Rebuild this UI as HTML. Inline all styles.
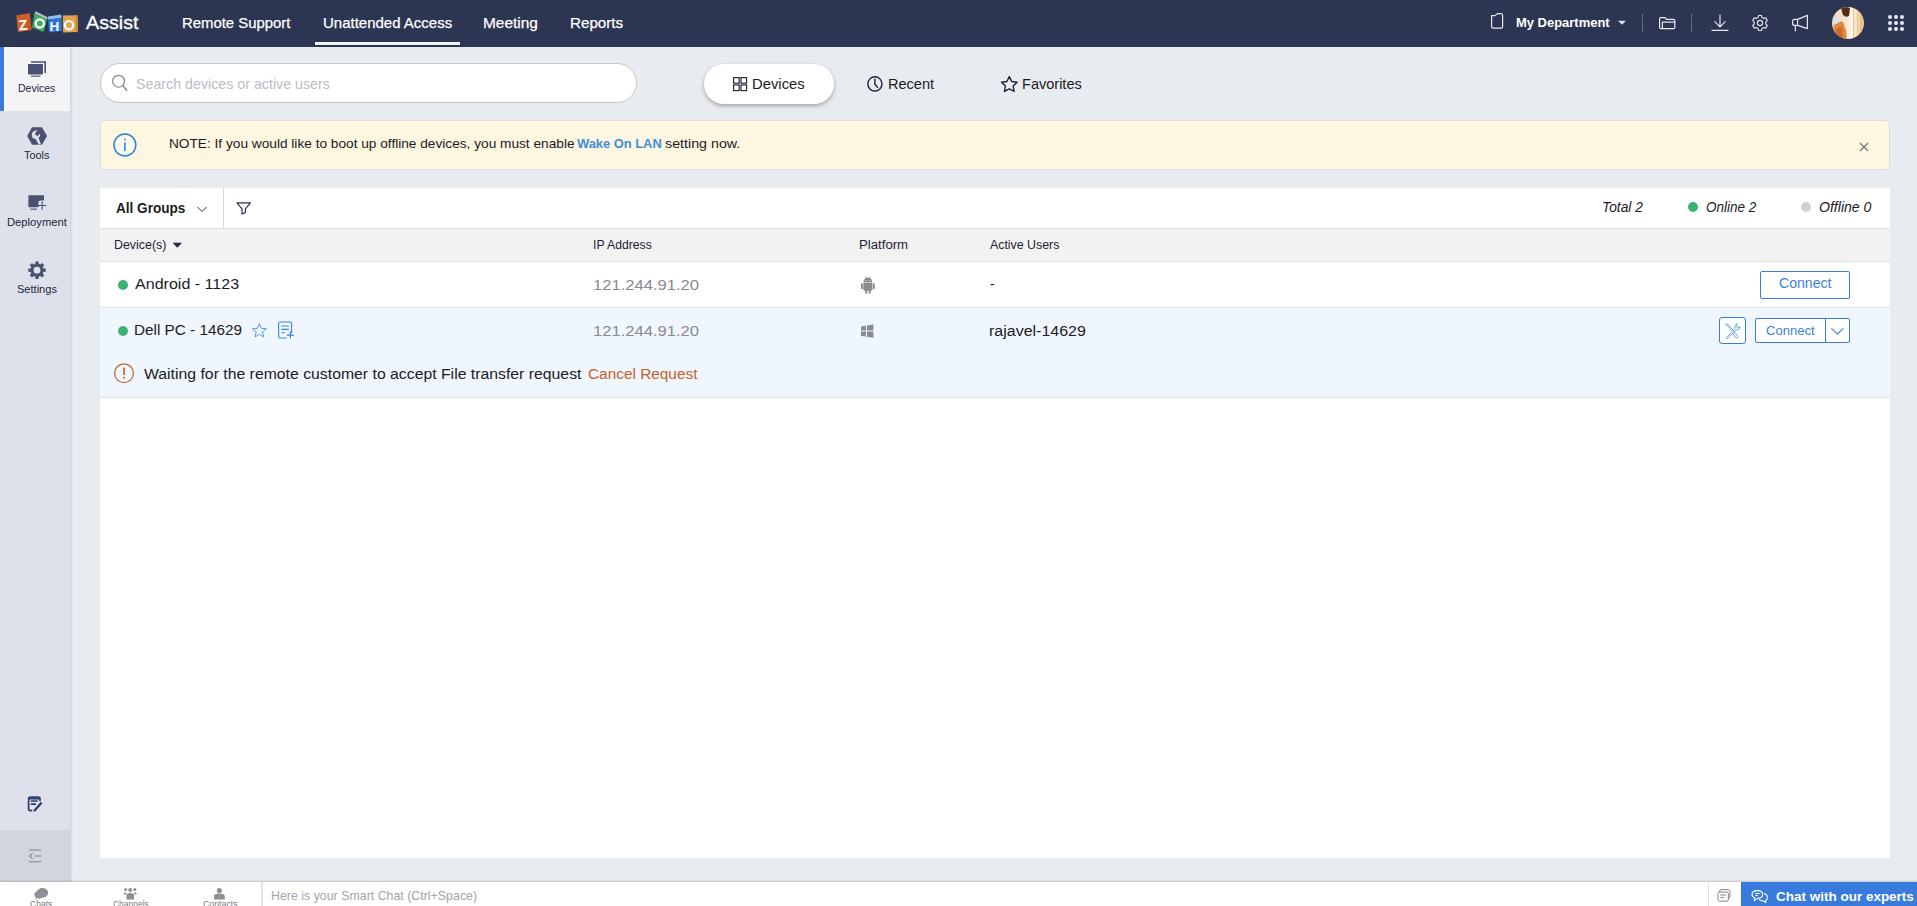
<!DOCTYPE html>
<html><head><meta charset="utf-8">
<style>
*{box-sizing:border-box;margin:0;padding:0}
html,body{width:1917px;height:906px;overflow:hidden;background:#e8ebf0;font-family:"Liberation Sans",sans-serif;color:#1b1b24}
.abs{position:absolute}
.t{position:absolute;white-space:nowrap;transform-origin:0 0;line-height:1}
#hdr{position:absolute;left:0;top:0;width:1917px;height:47px;background:#2c3552}
#hdr .t{color:#fff;-webkit-text-stroke:.25px #fff}
#side{position:absolute;left:0;top:47px;width:70px;height:835px;background:#dee1eb;box-shadow:1px 0 2px rgba(0,0,0,.14)}
#side .act{position:absolute;left:0;top:0;width:70px;height:64px;background:#f3f4f6;border-left:4px solid #3a7bdc}
#side .t{color:#23273a;font-size:11px}
#side .foot{position:absolute;left:0;top:783px;width:70px;height:52px;background:#d2d5dd}
#search{position:absolute;left:100px;top:63px;width:537px;height:40px;border:1px solid #c6c6cc;border-radius:20px;background:#fff}
#pill{position:absolute;left:704px;top:64px;width:130px;height:40px;border-radius:20px;background:#fff;box-shadow:0 2px 4px rgba(0,0,0,.3)}
#note{position:absolute;left:100px;top:120px;width:1790px;height:50px;background:#fdf6e0;border:1px solid #dadbe1;border-radius:4px}
#panel{position:absolute;left:100px;top:188px;width:1790px;height:670px;background:#fff}
#tb{position:absolute;left:0;top:0;width:1790px;height:41px;border-bottom:1px solid #dedede}
#thead{position:absolute;left:0;top:41px;width:1790px;height:33px;background:#f2f2f2;border-bottom:1px solid #e0e0e0}
#thead .t{font-size:12.5px;color:#1f2233}
#r1{position:absolute;left:0;top:74px;width:1790px;height:46px}
#r1:after{content:"";position:absolute;left:0;top:45px;width:1790px;height:1px;background:repeating-linear-gradient(90deg,#dde0e6 0 2px,#eef1f6 2px 3px)}
#r2{position:absolute;left:0;top:120px;width:1790px;height:90px;background:#f0f6fd;border-bottom:1px solid #dde1e8}
.dot{position:absolute;width:10px;height:10px;border-radius:5px;background:#3cb371}
.btn{position:absolute;border:1px solid #3a7bdc;border-radius:2px;background:#fff}
.stat{font-size:14px;font-style:italic;color:#1b1b24}
#bot{position:absolute;left:0;top:882px;width:1917px;height:24px;background:#fff;box-shadow:0 -1px 2px rgba(0,0,0,.18)}
</style></head><body>
<div id="hdr">
  <div class="t" id="t_assist" style="left:85.60px;top:14.46px;font-size:18.6px;-webkit-text-stroke:.3px #fff;transform:scaleX(1.0590)">Assist</div>
  <div class="t" id="t_rs" style="left:181.81px;top:15.30px;font-size:15px;transform:scaleX(0.9921)">Remote Support</div>
  <div class="t" id="t_ua" style="left:322.50px;top:15.30px;font-size:15px;transform:scaleX(0.9994)">Unattended Access</div>
  <div class="abs" style="left:315px;top:42px;width:145px;height:3px;background:#f2f3f7"></div>
  <div class="t" id="t_mt" style="left:483.47px;top:15.30px;font-size:15px;transform:scaleX(1.0284)">Meeting</div>
  <div class="t" id="t_rp" style="left:569.59px;top:15.30px;font-size:15px;transform:scaleX(1.0113)">Reports</div>
  <div class="t" id="t_md" style="-webkit-text-stroke:0;left:1515.60px;top:15.57px;font-size:13.5px;font-weight:bold;transform:scaleX(0.9600)">My Department</div>
</div>
<div id="side">
  <div class="act"></div>
  <div class="foot"></div>
</div>
<div class="t" id="t_s1" style="color:#23273a;font-size:11px;left:18.40px;top:83.09px;transform:scaleX(0.9540)">Devices</div>
<div class="t" id="t_s2" style="color:#23273a;font-size:11px;left:24.40px;top:149.69px;transform:scaleX(0.9855)">Tools</div>
<div class="t" id="t_s3" style="color:#23273a;font-size:11px;left:7.20px;top:217.09px;transform:scaleX(1.0198)">Deployment</div>
<div class="t" id="t_s4" style="color:#23273a;font-size:11px;left:17.00px;top:283.69px;transform:scaleX(1.0038)">Settings</div>
<div id="search"></div>
<div class="t" id="t_sr" style="left:136.40px;top:76.93px;font-size:14.5px;color:#bcbcc4;transform:scaleX(0.9817)">Search devices or active users</div>
<div id="pill"></div>
<div class="t" id="t_t1" style="left:751.81px;top:76.30px;font-size:15px;transform:scaleX(0.9875)">Devices</div>
<div class="t" id="t_t2" style="left:887.53px;top:76.30px;font-size:15px;transform:scaleX(0.9692)">Recent</div>
<div class="t" id="t_t3" style="left:1021.73px;top:76.30px;font-size:15px;transform:scaleX(0.9687)">Favorites</div>
<div id="note"></div>
<div class="t" id="t_nt1" style="left:168.59px;top:136.77px;font-size:13.5px;transform:scaleX(1.0126)">NOTE: If you would like to boot up offline devices, you must enable</div>
<div class="t" id="t_nt2" style="left:577.20px;top:136.77px;font-size:13.5px;font-weight:bold;color:#3f8ed9;transform:scaleX(0.9544)">Wake On LAN</div>
<div class="t" id="t_nt3" style="left:664.50px;top:136.77px;font-size:13.5px;transform:scaleX(1.0560)">setting now.</div>
<div id="panel">
  <div id="tb">
    <div class="abs" style="left:123px;top:0;width:1px;height:41px;background:#d9d9d9"></div>
    <div class="dot" style="left:1588px;top:14px"></div>
    <div class="dot" style="left:1701px;top:14px;background:#cfd0d6"></div>
  </div>
  <div id="thead"></div>
  <div id="r1">
    <div class="dot" style="left:18px;top:18px"></div>
    <div class="btn" style="left:1660px;top:9px;width:90px;height:28px"></div>
  </div>
  <div id="r2">
    <div class="dot" style="left:18px;top:18px"></div>
    <div class="btn" style="left:1619px;top:9px;width:27px;height:27px;border-radius:3px"></div>
    <div class="btn" style="left:1655px;top:10px;width:95px;height:25px"></div>
    <div class="abs" style="left:1725px;top:10px;width:1px;height:25px;background:#3a7bdc"></div>
  </div>
</div>
<div class="t" id="t_ag" style="left:116.40px;top:200.65px;font-size:14px;font-weight:bold;transform:scaleX(0.9697)">All Groups</div>
<div class="t stat" id="t_st1" style="left:1601.52px;top:199.65px;transform:scaleX(0.9846)">Total 2</div>
<div class="t stat" id="t_st2" style="left:1705.50px;top:199.65px;transform:scaleX(0.9645)">Online 2</div>
<div class="t stat" id="t_st3" style="left:1818.70px;top:199.65px;transform:scaleX(1.0047)">Offline 0</div>
<div class="t" id="t_h1" style="left:114.41px;top:238.82px;font-size:12.5px;color:#1f2233;transform:scaleX(0.9919)">Device(s)</div>
<div class="t" id="t_h2" style="left:593.42px;top:238.82px;font-size:12.5px;color:#1f2233;transform:scaleX(0.9751)">IP Address</div>
<div class="t" id="t_h3" style="left:858.75px;top:238.82px;font-size:12.5px;color:#1f2233;transform:scaleX(1.0548)">Platform</div>
<div class="t" id="t_h4" style="left:990.00px;top:238.82px;font-size:12.5px;color:#1f2233;transform:scaleX(0.9885)">Active Users</div>
<div class="t" id="t_d1" style="left:134.70px;top:275.78px;font-size:15.5px;transform:scaleX(1.0359)">Android - 1123</div>
<div class="t" id="t_ip1" style="left:593.33px;top:277.08px;font-size:15.5px;color:#8a8a8e;transform:scaleX(1.0700)">121.244.91.20</div>
<div class="t" id="t_u1" style="left:990px;top:277px;font-size:14px">-</div>
<div class="t" id="t_c1" style="left:1779.00px;top:276.15px;font-size:14px;color:#3b82d6;transform:scaleX(1.0066)">Connect</div>
<div class="t" id="t_d2" style="left:133.51px;top:321.58px;font-size:15.5px;transform:scaleX(0.9871)">Dell PC - 14629</div>
<div class="t" id="t_ip2" style="left:593.33px;top:322.58px;font-size:15.5px;color:#8a8a8e;transform:scaleX(1.0700)">121.244.91.20</div>
<div class="t" id="t_u2" style="left:988.97px;top:322.58px;font-size:15.5px;transform:scaleX(1.0314)">rajavel-14629</div>
<div class="t" id="t_c2" style="left:1766.00px;top:324.00px;font-size:13px;color:#3b82d6;transform:scaleX(1.0039)">Connect</div>
<div class="t" id="t_w" style="left:143.90px;top:365.78px;font-size:15.5px;transform:scaleX(1.0189)">Waiting for the remote customer to accept File transfer request</div>
<div class="t" id="t_cr" style="left:588.20px;top:365.88px;font-size:15.5px;color:#c7602a;transform:scaleX(0.9921)">Cancel Request</div>
<div id="bot">
  <div class="abs" style="left:261px;top:0;width:2px;height:24px;background:#e3e4e8"></div>
  <div class="abs" style="left:1708px;top:0;width:1px;height:24px;background:#e0e0e4"></div>
  <div class="abs" style="left:1741px;top:0;width:176px;height:24px;background:#397add"></div>
</div>
<div class="t" id="t_b1" style="left:30.30px;top:900.00px;font-size:8.5px;color:#77787e;transform:scaleX(1.0066)">Chats</div>
<div class="t" id="t_b2" style="left:112.70px;top:900.00px;font-size:8.5px;color:#77787e;transform:scaleX(0.9954)">Channels</div>
<div class="t" id="t_b3" style="left:202.50px;top:900.00px;font-size:8.5px;color:#77787e;transform:scaleX(1.0332)">Contacts</div>
<div class="t" id="t_sc" style="left:270.58px;top:889.97px;font-size:12.2px;color:#a4a4aa;transform:scaleX(1.0159)">Here is your Smart Chat (Ctrl+Space)</div>
<div class="t" id="t_ce" style="left:1776.20px;top:891.35px;font-size:12.7px;font-weight:bold;color:#fff;transform:scaleX(1.0628)">Chat with our experts</div>

<svg class="abs" style="left:0;top:0;pointer-events:none" width="1917" height="906" viewBox="0 0 1917 906">
<!-- LOGO -->
<g>
 <polygon points="16.3,15.6 29.6,13 31.6,30 17.9,32" fill="#cf6029"/>
 <polygon points="26,20 31,19 31.6,30 27,31" fill="#b85320" opacity=".6"/>
 <polygon points="35.6,11.2 47.8,17.2 47,19.6 34.4,13.6" fill="#b9bcc4"/>
 <polygon points="34.4,13.6 47,19.6 43.6,32 32,27.6" fill="#3fae62"/>
 <polygon points="48,16.6 61,14.4 61.6,18 48,19.6" fill="#8cc3f0"/>
 <polygon points="48,19.6 61.6,18 62,31 49,32.6" fill="#2f76d2"/>
 <polygon points="62.8,15.4 77.6,15.2 78,32 63,32.6" fill="#e3a352"/>
 <polygon points="75.5,15.2 77.6,15.2 78,32 76,32.2" fill="#cf8636"/>
 <text x="18.6" y="30" font-family="Liberation Sans" font-weight="bold" font-size="14.5" fill="#fff" transform="rotate(-6 23 25)">Z</text>
 <circle cx="39.8" cy="23.4" r="4.1" fill="none" stroke="#fff" stroke-width="2.3"/>
 <text x="49.6" y="30.6" font-family="Liberation Sans" font-weight="bold" font-size="13.5" fill="#fff">H</text>
 <circle cx="69" cy="25.2" r="4.2" fill="none" stroke="#fff" stroke-width="2.2"/>
</g>
<!-- HEADER RIGHT -->
<g fill="none" stroke="#e6e8ee" stroke-width="1.2" stroke-linejoin="round" stroke-linecap="round">
 <path d="M1491.6,15.6 L1495,15.6 L1497.4,13.6 L1501,13.6 Q1502.6,13.6 1502.6,15.2 L1502.6,26.6 Q1502.6,28.2 1501,28.2 L1493.2,28.2 Q1491.6,28.2 1491.6,26.6Z"/>
 <path d="M1659.6,27.6 L1659.6,18.6 Q1659.6,17.6 1660.6,17.6 L1665,17.6 L1666.4,19.4 L1673.6,19.4 Q1674.8,19.4 1674.8,20.6 L1674.8,27.4 Q1674.8,28.6 1673.6,28.6 L1660.8,28.6 Q1659.6,28.6 1659.6,27.6Z"/>
 <path d="M1662.4,28.4 L1662.4,22.2 L1674.6,22.2"/>
 <path d="M1720,15 L1720,26.6 M1714.8,21.6 L1720,26.8 L1725.2,21.6 M1712,30.4 L1728,30.4"/>
 <path d="M1761.94,28.57 L1761.60,30.53 L1758.40,30.53 L1758.06,28.57 L1756.14,27.47 L1754.28,28.15 L1752.68,25.38 L1754.20,24.11 L1754.20,21.89 L1752.68,20.62 L1754.28,17.85 L1756.14,18.53 L1758.06,17.43 L1758.40,15.47 L1761.60,15.47 L1761.94,17.43 L1763.86,18.53 L1765.72,17.85 L1767.32,20.62 L1765.80,21.89 L1765.80,24.11 L1767.32,25.38 L1765.72,28.15 L1763.86,27.47Z" stroke-width="1.1"/>
 <circle cx="1760" cy="23" r="2.6" stroke-width="1.1"/>
 <path d="M1807.4,15.4 L1807.4,28.6 L1797.6,25.4 L1794.6,25.4 Q1792.6,25.4 1792.6,23.4 L1792.6,21.4 Q1792.6,19.4 1794.6,19.4 L1797.6,19.4 Z M1797.6,19.4 L1797.6,25.4 M1795.4,25.6 L1795.4,30.8"/>
</g>
<path d="M1618,20.8 L1626,20.8 L1622,24.8Z" fill="#dfe2ea"/>
<path d="M1642.5,14.5 V31.5 M1691.5,14.5 V31.5" stroke="#7e859a" stroke-width="1" stroke-dasharray="2 1"/>
<g fill="#e8e9ee">
 <circle cx="1890" cy="17" r="2"/><circle cx="1896" cy="17" r="2"/><circle cx="1902" cy="17" r="2"/>
 <circle cx="1890" cy="23" r="2"/><circle cx="1896" cy="23" r="2"/><circle cx="1902" cy="23" r="2"/>
 <circle cx="1890" cy="29" r="2"/><circle cx="1896" cy="29" r="2"/><circle cx="1902" cy="29" r="2"/>
</g>
<!-- AVATAR -->
<defs><clipPath id="av"><circle cx="1848" cy="23" r="16"/></clipPath>
<linearGradient id="avg" x1="0" x2="1" y1="0" y2="0"><stop offset="0" stop-color="#f3d9b0"/><stop offset=".45" stop-color="#f6e6cc"/><stop offset=".62" stop-color="#fffaf0"/><stop offset=".8" stop-color="#f4dcb4"/><stop offset="1" stop-color="#e9c48c"/></linearGradient></defs>
<g clip-path="url(#av)">
 <rect x="1832" y="7" width="32" height="32" fill="url(#avg)"/>
 <path d="M1834,24 Q1838,20 1843,22 L1846,30 L1847,40 L1832,40Z" fill="#d98a45"/>
 <path d="M1836,30 Q1839,26 1842,28 L1843,39 L1835,39Z" fill="#c96a2a"/>
 <path d="M1841,8 Q1846,6 1850,8 L1849,16 Q1846,18 1843,15Z" fill="#5a2a18"/>
 <rect x="1853" y="8" width="1.2" height="30" fill="#e8c792"/><rect x="1857" y="9" width="1.2" height="28" fill="#e8c792"/><rect x="1860.5" y="12" width="1.2" height="22" fill="#e2b877"/>
 <path d="M1833,18 L1839,14 L1840,22 L1834,25Z" fill="#dfe0e6"/>
</g>
<!-- SIDEBAR ICONS -->
<g fill="#4b5271">
 <!-- devices -->
 <path d="M31,61.2 H46 V73 H44.4 V62.8 H31Z"/>
 <rect x="28" y="64" width="15" height="10.6" rx="0.8"/>
 <rect x="31" y="75.6" width="9.4" height="1.1"/>
 <!-- tools hexagon -->
 <path d="M32,127.2 H42 L47,136 L42,144.8 H32 L27.2,136Z"/>
 <!-- deployment -->
 <path d="M28.4,195.2 H44 V200.6 H40.6 Q38.4,200.6 38.4,202.8 V207.2 H28.4Z"/>
 <rect x="30.4" y="208.6" width="6.4" height="1.1"/>
 <path d="M41.6,201.4 h1.1 v3.6 h3.6 v1.1 h-3.6 v3.6 h-1.1 v-3.6 h-3.6 v-1.1 h3.6Z"/>
 <!-- settings gear -->
 <path fill-rule="evenodd" d="M43.35,268.41 L45.76,268.60 L45.76,271.80 L43.35,271.99 L42.76,273.42 L44.32,275.26 L42.06,277.52 L40.22,275.96 L38.79,276.55 L38.60,278.96 L35.40,278.96 L35.21,276.55 L33.78,275.96 L31.94,277.52 L29.68,275.26 L31.24,273.42 L30.65,271.99 L28.24,271.80 L28.24,268.60 L30.65,268.41 L31.24,266.98 L29.68,265.14 L31.94,262.88 L33.78,264.44 L35.21,263.85 L35.40,261.44 L38.60,261.44 L38.79,263.85 L40.22,264.44 L42.06,262.88 L44.32,265.14 L42.76,266.98Z M33.60,270.20 a3.40,3.40 0 1,0 6.80,0 a3.40,3.40 0 1,0 -6.80,0Z"/>
</g>
<!-- wrench cut in hexagon -->
<g fill="#dfe2ec">
 <path d="M35.2,130.6 Q31.6,131.6 31.8,135.4 Q32.2,138.6 35.6,139 L38.8,144.4 L41,144.4 L38.6,138 Q40.6,136.4 40.2,133.8 L37.4,136 L35.4,135 L35.2,132.8 L37.6,130.8 Q36.4,130.4 35.2,130.6Z"/>
</g>
<!-- bottom edit icon -->
<g fill="none" stroke="#2a3a6c" stroke-width="1.7" stroke-linecap="round" stroke-linejoin="round">
 <path d="M40,800.6 V798.8 Q40,797 38.2,797 H30.4 Q28.6,797 28.6,798.8 V808.8 Q28.6,810.6 30.4,810.6 H31.6"/>
 <path d="M31.4,801 H37 M31.4,804.2 H35.4"/>
 <path d="M29.6,798.4 H39" stroke-width="2"/>
 <path d="M41,803.2 L34.6,810.4" stroke-width="2.2"/>
</g>
<g fill="none" stroke="#7d8392" stroke-width="1.1">
 <path d="M29,850 H41.2 M34.6,856 H41.2 M29,861.8 H41.2 M32.6,853.4 L29.8,856 L32.6,858.6"/>
</g>
<!-- SEARCH ICON -->
<g fill="none" stroke="#8c8c94" stroke-width="1.3" stroke-linecap="round">
 <circle cx="118.6" cy="81.2" r="5.9"/><path d="M122.8,85.6 L126.6,90.2" stroke-width="1.6"/>
</g>
<!-- TAB ICONS -->
<g fill="none" stroke="#1f2233" stroke-width="1.15">
 <rect x="733.6" y="77.6" width="5.6" height="5.6"/><rect x="741" y="77.6" width="5.6" height="5.6"/>
 <rect x="733.6" y="85" width="5.6" height="5.6"/><rect x="741" y="85" width="5.6" height="5.6"/>
 <circle cx="874.9" cy="83.9" r="7.1" stroke-width="1.4"/><path d="M874.9,79.2 V84.2 L877.6,87.4" stroke-width="1.4" stroke-linecap="round" stroke-linejoin="round"/>
 <path d="M1009.30,76.60 L1011.71,81.48 L1017.10,82.27 L1013.20,86.07 L1014.12,91.43 L1009.30,88.90 L1004.48,91.43 L1005.40,86.07 L1001.50,82.27 L1006.89,81.48Z" stroke-width="1.4" stroke-linejoin="round"/>
</g>
<!-- BANNER ICONS -->
<circle cx="124.9" cy="145" r="10.9" fill="#fdfaf0" stroke="#2e83d8" stroke-width="1.5"/>
<rect x="124.1" y="142.4" width="1.6" height="8.6" fill="#2e83d8"/><rect x="124.1" y="138.6" width="1.6" height="1.8" fill="#2e83d8"/>
<path d="M1860,143 L1868,151 M1868,143 L1860,151" stroke="#70737d" stroke-width="1.2"/>
<!-- TOOLBAR ICONS -->
<path d="M197.4,207 L202,211.4 L206.6,207" fill="none" stroke="#85878f" stroke-width="1.2"/>
<path d="M237,202.8 H250.4 L245.4,208.8 V212.6 L242,214 V208.8Z" fill="none" stroke="#2a2f45" stroke-width="1.15" stroke-linejoin="round"/>
<path d="M172.6,242.8 H182 L177.3,247.8Z" fill="#23283c"/>
<!-- ROW ICONS -->
<path d="M259.40,323.70 L261.34,328.33 L266.34,328.74 L262.54,332.02 L263.69,336.91 L259.40,334.30 L255.11,336.91 L256.26,332.02 L252.46,328.74 L257.46,328.33Z" fill="none" stroke="#4a8fe0" stroke-width=".9" stroke-linejoin="round"/>
<g fill="none" stroke="#3a82e0" stroke-width="1.1">
 <path d="M291.6,333 V323.4 Q291.6,322 290.2,322 H280 Q278.6,322 278.6,323.4 V336.6 Q278.6,338 280,338 H286.6"/>
 <path d="M281.4,326 H288.8 M281.4,329.4 H288.8 M281.4,332.8 H285"/>
 <path d="M290.4,331.6 V338.6 M286.9,335.1 H293.9" stroke-width="1.2"/>
</g>
<!-- warning -->
<circle cx="124" cy="373.2" r="9.4" fill="none" stroke="#c7632c" stroke-width="1.3"/>
<rect x="123.2" y="367.6" width="1.7" height="7.4" fill="#c7632c"/><rect x="123.2" y="376.8" width="1.7" height="1.9" fill="#c7632c"/>
<!-- android -->
<g fill="#8b8b8f">
 <path d="M863.4,282.5 A4.5,4.9 0 0 1 872.4,282.5Z"/>
 <rect x="863.4" y="283" width="9" height="7.8" rx="0.8"/>
 <rect x="861" y="283.2" width="1.9" height="6" rx="0.9"/><rect x="872.9" y="283.2" width="1.9" height="6" rx="0.9"/>
 <rect x="865.2" y="290" width="2" height="3.8" rx="0.9"/><rect x="868.6" y="290" width="2" height="3.8" rx="0.9"/>
 <path d="M865.2,276.6 L866.4,278.8 M870.6,276.6 L869.4,278.8" stroke="#8b8b8f" stroke-width=".6"/>
</g>
<circle cx="866" cy="280.4" r=".5" fill="#fff"/><circle cx="869.8" cy="280.4" r=".5" fill="#fff"/>
<!-- windows -->
<g fill="#8b8b8f">
 <path d="M861,326.4 L866,325.7 V330.4 H861Z M867,325.5 L873.4,324.5 V330.4 H867Z M861,331.4 H866 V336.6 L861,335.9Z M867,331.4 H873.4 V337.8 L867,336.8Z"/>
</g>
<!-- tools btn icon + chevron -->
<g fill="none" stroke="#5b9be6" stroke-width="0.9" stroke-linecap="round" stroke-linejoin="round">
 <path d="M1726,324.4 L1727,323.6 L1733.2,330.2 M1726,324.4 L1732.4,331"/>
 <path d="M1734.4,332.2 L1737.8,336 Q1738.6,337 1737.6,337.8 Q1736.6,338.6 1735.8,337.6 L1732.8,333.6"/>
 <path d="M1726.4,337.6 L1735,328.6 Q1733.6,325.2 1737.4,323.6 L1736.4,326.4 L1738,327.8 L1740,326.4 Q1739.6,330 1736.2,329.8 L1727.6,338.6Z"/>
 <path d="M1831.6,328.6 L1837.4,334 L1843.2,328.6" stroke-width="1.2" stroke="#4a8fe0"/>
</g>
<!-- BOTTOM BAR ICONS -->
<g fill="#8f9097">
 <ellipse cx="42.4" cy="892.8" rx="5.8" ry="4.8"/><path d="M39.6,896.4 L38.4,899.4 L42.6,897.2Z"/>
 <ellipse cx="38.4" cy="894.6" rx="4" ry="3.4"/><path d="M36,897 L35.4,899.6 L38.6,897.6Z"/>
 <circle cx="130.2" cy="890" r="2"/><path d="M126.4,899.4 V895.4 Q126.4,893 130.2,893 Q134,893 134,895.4 V899.4Z"/>
 <circle cx="125.6" cy="889.6" r="1.5"/><circle cx="134.8" cy="889.6" r="1.5"/>
 <path d="M123.6,894.4 Q123.6,892 126.4,892.2 L125.8,894.4Z M136.8,894.4 Q136.800,892 134,892.2 L134.600,894.4Z"/>
 <circle cx="219.400" cy="890.6" r="2.600"/><path d="M214,899.400 V896.4 Q214,893.600 219.400,893.600 Q224.800,893.600 224.800,896.4 V899.400Z"/>
</g>
<g fill="none" stroke="#6f7686" stroke-width=".9">
 <rect x="1719.600" y="889.6" width="10.4" height="8.400" rx="1.600"/>
 <rect x="1718" y="892" width="10.400" height="9.2" rx="1.600" fill="#fff"/>
 <path d="M1720.400,895 H1726 M1720.400,897.600 H1724"/>
</g>
<g fill="none" stroke="#fff" stroke-width="1.1" stroke-linejoin="round">
 <path d="M1757.400,890.6 Q1762.600,890.6 1762.600,894.600 Q1762.600,898.400 1757.400,898.400 L1754.400,900.600 L1754.800,898 Q1752,897 1752,894.600 Q1752,890.6 1757.400,890.6Z"/>
 <path d="M1764,893.400 Q1767.400,894.400 1767.400,897.400 Q1767.400,899.600 1765.400,900.400 L1765.800,902.600 L1763,900.800 Q1760.400,901 1759,899.400"/>
 <path d="M1755,893.600 H1759.600 M1755,895.600 H1758" stroke-width="1"/>
</g>

</svg>
</body></html>
